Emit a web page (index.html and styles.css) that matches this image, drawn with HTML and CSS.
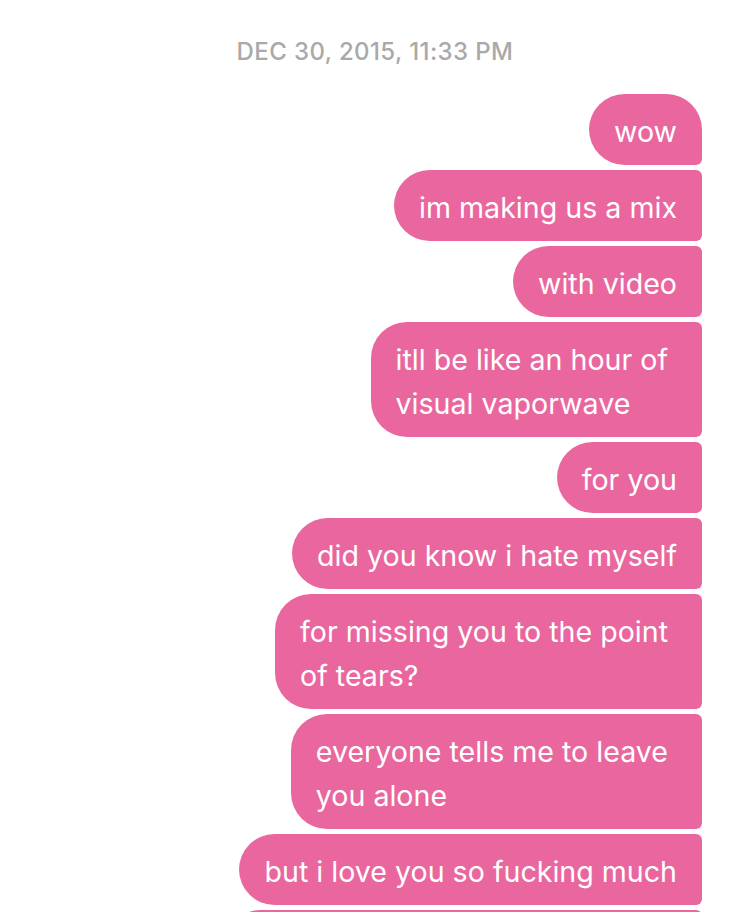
FILE: index.html
```html
<!DOCTYPE html>
<html lang="en">
<head>
    <meta charset="UTF-8">
    <meta name="viewport" content="width=device-width, initial-scale=1.0">
    <title>Messages</title>
    <link rel="stylesheet" href="styles.css">
</head>
<body>
    <div class="thread">
        <div class="timestamp">DEC 30, 2015, 11:33 PM</div>

        <div class="messages">
            <div class="bubble first">wow</div>
            <div class="bubble">im making us a mix</div>
            <div class="bubble">with video</div>
            <div class="bubble wrapped">itll be like an hour of<br>visual vaporwave</div>
            <div class="bubble">for you</div>
            <div class="bubble">did you know i hate myself</div>
            <div class="bubble wrapped">for missing you to the point<br>of tears?</div>
            <div class="bubble wrapped">everyone tells me to leave<br>you alone</div>
            <div class="bubble">but i love you so fucking much</div>
            <!-- next message is below the fold, only its top edge shows -->
            <div class="bubble tail">&nbsp;</div>
        </div>
    </div>
</body>
</html>
```

FILE: styles.css
```css
body {
    margin: 0;
    background: #fff;
    font-family: Inter, "Noto Sans", sans-serif;
    overflow: hidden;
}

.thread {
    padding: 37px 48px 0 0;
}

.timestamp {
    text-align: center;
    color: #a9a9a9;
    font-size: 24px;
    font-weight: 500;
    letter-spacing: 0.4px;
    line-height: 30px;
    padding-left: 48px;
    margin-bottom: 27px;
}

.messages {
    display: flex;
    flex-direction: column;
    align-items: flex-end;
    gap: 5px;
}

.bubble {
    background: #e9679e;
    color: #fff;
    font-size: 28.6px;
    line-height: 44px;
    padding: 16px 25px 11px 25px;
    border-radius: 36px 6px 6px 36px;
}

.bubble.first {
    border-top-right-radius: 36px;
}

.bubble.wrapped {
    padding-right: 34px;
}

.bubble.tail {
    width: 427px;
}
```
